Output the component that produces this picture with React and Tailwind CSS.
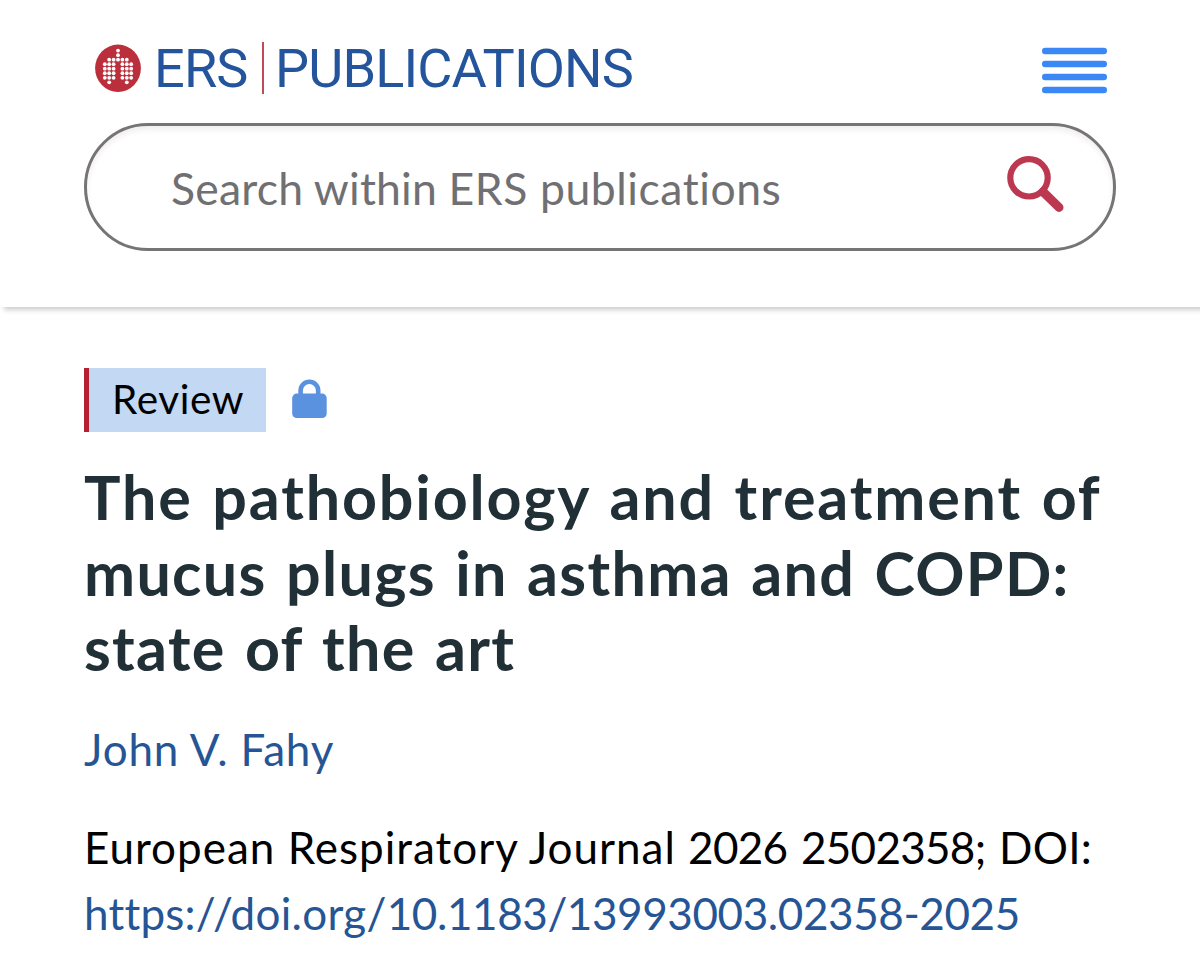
import React from 'react';

// Lungs mark: each entry lists the columns that hold a dot on that row.
const LOGO_DOTS = [
  [3],
  [3],
  [1, 2, 3, 4, 5],
  [0, 1, 2, 4, 5, 6],
  [0, 1, 2, 4, 5, 6],
  [0, 1, 2, 4, 5, 6],
  [0, 1, 2, 4, 5, 6],
  [1, 5],
];

const TITLE_LINES = [
  { text: 'The pathobiology and treatment of', className: 'tracking-[1.85px] [word-spacing:3px]' },
  { text: 'mucus plugs in asthma and COPD:', className: 'tracking-[1.3px] [word-spacing:3.3px]' },
  { text: 'state of the art', className: 'tracking-[1.3px] [word-spacing:3.3px]' },
];

function LungsLogo() {
  return (
    <svg width="46" height="48" viewBox="0 0 46 48" aria-hidden="true">
      <ellipse cx="23" cy="24.3" rx="22.9" ry="23.7" fill="#bb2f3c" />
      {LOGO_DOTS.map((cols, row) =>
        cols.map((col) => (
          <circle key={`${row}-${col}`} cx={9.8 + col * 4.4} cy={6.6 + row * 4.53} r="1.9" fill="#fff" />
        ))
      )}
    </svg>
  );
}

function MenuIcon() {
  return (
    <svg width="65" height="47" viewBox="0 0 65 47" fill="#3b87f6">
      {[0, 13, 26, 39].map((y) => (
        <rect key={y} x="0" y={y + 0.7} width="65" height="6.6" rx="3.3" />
      ))}
    </svg>
  );
}

function SearchIcon() {
  return (
    <svg width="58" height="58" viewBox="0 0 58 58" fill="none" stroke="#bb3850">
      <circle cx="23" cy="22.8" r="18.7" strokeWidth="6.2" />
      <path d="M37 36.8L53 52.4" strokeWidth="9" strokeLinecap="round" />
    </svg>
  );
}

function LockIcon() {
  return (
    <svg width="35" height="40" viewBox="0 0 35 40">
      <path d="M8.6 18V11.5a8.8 8.8 0 0 1 17.6 0V18" fill="none" stroke="#5b92e0" strokeWidth="4.6" />
      <rect x="0.2" y="14.6" width="34.5" height="24.4" rx="4.5" fill="#5b92e0" />
    </svg>
  );
}

function Header() {
  return (
    <header className="h-[307px] bg-white px-[84px] pt-[42px] shadow-[4px_3px_5px_rgba(0,0,0,0.2)]">
      <div className="flex h-[52px] items-center justify-between pr-[9px] pl-[11px]">
        <a href="#" className="flex items-center font-[Roboto,sans-serif] text-[54px] leading-[52px] text-[#23549c]">
          <LungsLogo />
          <span className="ml-[13px] w-[95px] pt-[2px] whitespace-nowrap tracking-[-0.8px]">ERS</span>
          <span className="ml-[13px] h-[52px] w-[2px] bg-[#c04a58]" />
          <span className="ml-[11px] pt-[2px] whitespace-nowrap tracking-[-0.85px]">PUBLICATIONS</span>
        </a>
        <button aria-label="Menu" className="mt-[5px]">
          <MenuIcon />
        </button>
      </div>
      <form className="mt-[29px] flex h-[128px] items-center justify-between rounded-full border-3 border-[#777477] pr-[49px] pl-[84px] shadow-[inset_0_4px_5px_rgba(90,50,60,0.08)]">
        <span className="pt-[2px] text-[44.5px] whitespace-nowrap text-[#706f72]">
          <span className="tracking-[0.2px]">Search within </span>
          <span className="tracking-[0.55px]">ERS publications</span>
        </span>
        <button type="button" aria-label="Search" className="-mt-[6px]">
          <SearchIcon />
        </button>
      </form>
    </header>
  );
}

export default function App() {
  return (
    <div className="h-[962px] overflow-hidden bg-white font-[Lato,sans-serif]">
      <Header />
      <main className="px-[84px] pt-[61px]">
        <div className="flex h-[64px] items-center">
          <span className="h-[64px] w-[182px] border-l-5 border-[#b4202f] bg-[#c2d8f3] pb-[2px] pl-[23px] text-[40.5px] leading-[62px] whitespace-nowrap text-black tracking-[0.6px]">
            Review
          </span>
          <span className="mb-[2px] ml-[26px]">
            <LockIcon />
          </span>
        </div>
        <h1 className="mt-[27px] text-[61px] leading-[75.5px] font-bold text-[#213036]">
          {TITLE_LINES.map((line) => (
            <span key={line.text} className={`block whitespace-nowrap ${line.className}`}>
              {line.text}
            </span>
          ))}
        </h1>
        <p className="mt-[30px] text-[44px] leading-[66.5px]">
          <a href="#" className="whitespace-nowrap text-[#265595] tracking-[0.85px]">John V. Fahy</a>
        </p>
        <p className="mt-[31.5px] text-[44px] leading-[66.5px] text-black">
          <span className="block whitespace-nowrap tracking-[1px]">
            European Respiratory Journal{' '}
            <span className="tracking-[-0.7px] [word-spacing:3px]">2026 2502358; </span>
            <span className="tracking-[0.2px]">DOI:</span>
          </span>
          <a href="#" className="block whitespace-nowrap text-[#265595]">
            <span className="tracking-[0.2px]">https:</span>
            <span className="tracking-[-2.5px] [font-kerning:none]">//</span>
            <span className="tracking-[0.3px]">doi.org/</span>
            <span className="tracking-[-0.4px]">10.1183/13993003.02358-2025</span>
          </a>
        </p>
      </main>
    </div>
  );
}
